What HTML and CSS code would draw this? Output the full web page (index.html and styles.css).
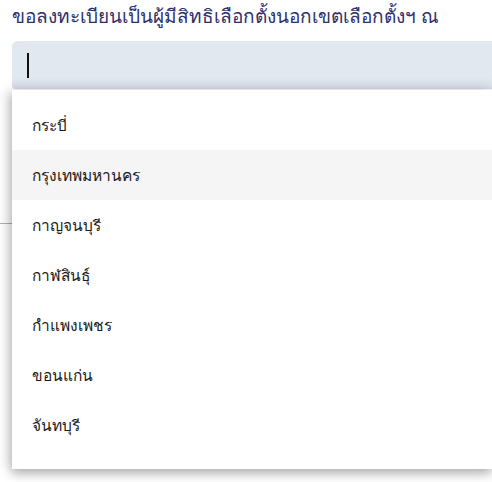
FILE: index.html
```html
<!DOCTYPE html>
<html lang="th">
<head>
<meta charset="utf-8">
<link rel="stylesheet" href="styles.css">
</head>
<body>
<div class="page">
  <label class="title">ขอลงทะเบียนเป็นผู้มีสิทธิเลือกตั้งนอกเขตเลือกตั้งฯ ณ</label>
  <div class="field">
    <div class="input"><span class="caret"></span></div>
    <ul class="menu">
      <li>กระบี่</li>
      <li class="active">กรุงเทพมหานคร</li>
      <li>กาญจนบุรี</li>
      <li>กาฬสินธุ์</li>
      <li>กำแพงเพชร</li>
      <li>ขอนแก่น</li>
      <li>จันทบุรี</li>
    </ul>
  </div>
  <div class="divider"></div>
</div>
</body>
</html>
```

FILE: styles.css
```css
html, body {
  margin: 0;
  padding: 0;
  background: #ffffff;
}
body {
  font-family: "Noto Sans", sans-serif;
  width: 492px;
  height: 482px;
  overflow: hidden;
}
.page {
  padding: 0 0 0 12px;
  position: relative;
}
.title {
  display: block;
  font-size: 19px;
  font-weight: 500;
  color: #2d2f6b;
  line-height: 26px;
  padding-top: 3px;
  height: 38px;
  white-space: nowrap;
}
.field {
  position: relative;
}
.input {
  height: 48px;
  background: linear-gradient(to bottom, #e2e8f0 0%, #e2e8f0 75%, #d8dee8 100%);
  border-radius: 6px 0 0 4px;
  display: flex;
  align-items: center;
  padding-left: 15px;
}
.caret {
  display: block;
  width: 1.5px;
  height: 25px;
  background: #111111;
}
.menu {
  position: absolute;
  top: 49px;
  left: 0;
  right: 0;
  z-index: 2;
  list-style: none;
  margin: 0;
  padding: 10px 0 0 0;
  height: 369px;
  box-sizing: border-box;
  height: 379px;
  overflow: hidden;
  background: #ffffff;
  box-shadow: 0 5px 10px rgba(0,0,0,0.25), -4px 0 12px rgba(0,0,0,0.14);
}
.menu li {
  height: 50px;
  line-height: 50px;
  padding-left: 20px;
  font-size: 15.5px;
  color: #1a1a1a;
}
.menu li.active {
  background: #f5f5f5;
}
.divider {
  margin-left: -12px;
  margin-top: 134px;
  height: 1px;
  background: #b0b0b0;
}
```
